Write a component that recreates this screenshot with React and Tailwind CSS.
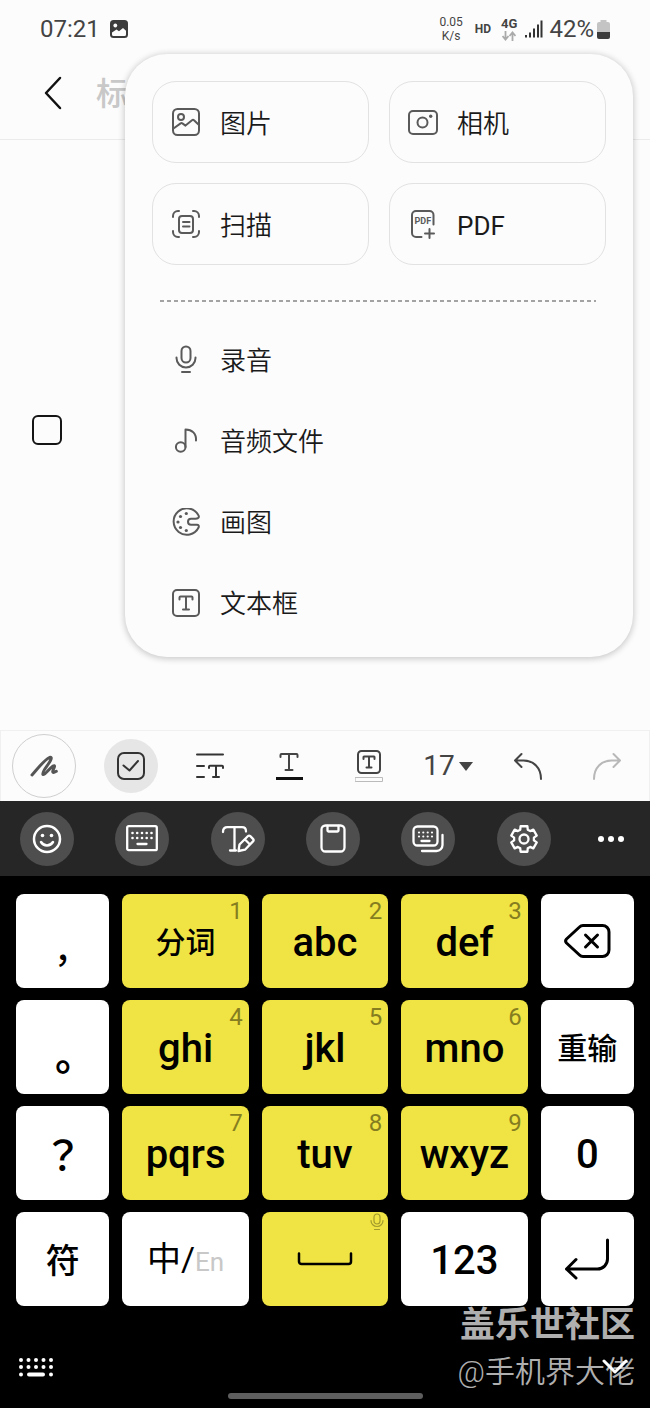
import React from 'react';
import clsx from 'clsx';

const Icon = ({ w, h, sw = 2, className, children }) => (
  <svg
    width={w}
    height={h}
    viewBox={`0 0 ${w} ${h}`}
    fill="none"
    stroke="currentColor"
    strokeWidth={sw}
    strokeLinecap="round"
    strokeLinejoin="round"
    className={clsx('shrink-0', className)}
    aria-hidden="true"
  >
    {children}
  </svg>
);

const Dots = ({ points, r }) =>
  points.map(([x, y]) => <circle key={`${x}-${y}`} cx={x} cy={y} r={r} fill="currentColor" stroke="none" />);

const grid = (xs, ys) => ys.flatMap((y) => xs.map((x) => [x, y]));

/* ---------- insert menu icons ---------- */

const ImageIcon = () => (
  <Icon w={28} h={28}>
    <rect x="1" y="1" width="26" height="26" rx="4.5" />
    <circle cx="9" cy="9" r="3" />
    <path d="M1.5 20.5L8.6 15.4a1.6 1.6 0 0 1 1.8 0L13.5 17.6 20 12.2a1.6 1.6 0 0 1 2 0L27 17" />
  </Icon>
);

const CameraIcon = () => (
  <Icon w={30} h={25}>
    <rect x="1" y="1" width="28" height="23" rx="4" />
    <circle cx="14.5" cy="12.5" r="5" />
    <circle cx="22.7" cy="6.3" r="1.7" fill="currentColor" stroke="none" />
  </Icon>
);

const ScanIcon = () => (
  <Icon w={28} h={28}>
    <path d="M1 7V6a5 5 0 0 1 5-5h1M21 1h1a5 5 0 0 1 5 5v1M27 21v1a5 5 0 0 1-5 5h-1M7 27H6a5 5 0 0 1-5-5v-1" />
    <rect x="7" y="6" width="14" height="17" rx="3" />
    <path d="M11 12h6.500M11 16.500h6.500" />
  </Icon>
);

const PdfIcon = () => (
  <Icon w={24} h={29}>
    <path d="M22.500 14.500V5a4 4 0 0 0-4-4H5a4 4 0 0 0-4 4V23a4 4 0 0 0 4 4h5.500M18.500 19v9M14 23.500h9" />
    <text x="11.800" y="13.500" fontSize="9" fontWeight="700" fontFamily="Roboto, sans-serif" textAnchor="middle" fill="currentColor" stroke="none">
      PDF
    </text>
  </Icon>
);

const MicIcon = () => (
  <Icon w={28} h={29}>
    <rect x="9.500" y="1.500" width="9" height="16" rx="4.500" />
    <path d="M4.500 12.500v.5a9.500 9.500 0 0 0 19 0v-.5M10 27h8" />
  </Icon>
);

const NoteIcon = () => (
  <Icon w={28} h={28}>
    <circle cx="8.700" cy="20" r="4.800" />
    <path d="M13.500 20V2.500c6.500 0 11 4 10.500 11" />
  </Icon>
);

const PaletteIcon = () => (
  <Icon w={28} h={28}>
    <path d="M26 10.200C27.200 9.500 27.100 8.300 26.300 7A13.200 13.200 0 1 0 26.600 19.500C27.200 18 26.500 16.800 25 16.800H19a3 3 0 0 1 0-6H23.500C24.600 10.800 25.400 10.600 26 10.200z" />
    <Dots r={1.6} points={[[14.300, 5.500], [8.500, 8.500], [6, 14], [8.500, 19.500], [14.300, 22.500]]} />
  </Icon>
);

const TextBoxIcon = () => (
  <Icon w={28} h={28}>
    <rect x="1" y="1" width="26" height="26" rx="4" />
    <path d="M7.500 10.500V8.500a1 1 0 0 1 1-1h11a1 1 0 0 1 1 1v2M14 7.500v13M11 20.500h6" />
  </Icon>
);

/* ---------- note toolbar icons ---------- */

const ScribbleIcon = () => (
  <Icon w={30} h={24} sw={3}>
    <path d="M3 21C8 15.500 15 6 20.500 3.500c3.500-1 1 3.500-1.500 7-2.500 3.500-6.500 8.500-5 10 2 1 6-6 10-8.500 2.500-1.200 1.500 1.200.3 3.500-1.200 2.700-.8 4 3 1.800" />
  </Icon>
);

const CheckIcon = () => (
  <Icon w={28} h={28} sw={2}>
    <rect x="1" y="1" width="26" height="26" rx="6" />
    <path d="M6.500 13.500l6 5L21 9" />
  </Icon>
);

const ParagraphIcon = () => (
  <Icon w={30} h={28} sw={2} className="text-[#333]">
    <path d="M2 2.500h26M2 14h7M2 25h7M14 16v-1.200a1 1 0 0 1 1-1h12a1 1 0 0 1 1 1V16M21 13.800V25M18 25h6" />
  </Icon>
);

const TextColorIcon = () => (
  <Icon w={28} h={30} sw={2} className="text-[#444]">
    <path d="M5.500 6V4a1 1 0 0 1 1-1h15a1 1 0 0 1 1 1v2M14 3v16M10.500 19h7" />
    <rect x="1" y="26" width="27" height="3" fill="#111" stroke="none" />
  </Icon>
);

const HighlightIcon = () => (
  <Icon w={28} h={32} sw={2}>
    <rect x="3" y="1" width="22" height="22" rx="3.500" />
    <path d="M8.500 9V7a.5.5 0 0 1 .5-.5h10a.5.5 0 0 1 .5.5v2M14 6.500v11M11.500 17.500h5" />
    <rect x=".5" y="27.500" width="27" height="4" stroke="#bbb" strokeWidth="1" />
  </Icon>
);

const UndoIcon = ({ className }) => (
  <Icon w={30} h={28} sw={2} className={className}>
    <path d="M8.500 2L2 8.500l6.500 6.500M2 8.500h8.500c10 0 17.500 7 17.500 18.500" />
  </Icon>
);

/* ---------- keyboard icons ---------- */

const SmileIcon = () => (
  <Icon w={30} h={30} sw={2.500}>
    <circle cx="15" cy="15" r="13" />
    <Dots r={1.8} points={[[10.500, 11.500], [19.500, 11.500]]} />
    <path d="M9 18c1.500 2.500 3.500 3.500 6 3.500s4.500-1 6-3.500" />
  </Icon>
);

const KeyboardIcon = () => (
  <Icon w={32} h={27} sw={2.300}>
    <rect x="1.200" y="1.200" width="29.600" height="24" rx="1.500" />
    <Dots r={1.3} points={grid([6.500, 11.200, 16, 20.700, 25.500], [8, 13])} />
    <path d="M11.500 19h9" />
  </Icon>
);

const TextEditIcon = () => (
  <Icon w={34} h={28} sw={2.300}>
    <path d="M2 7C2 4 3.500 2.200 6.500 2.200H21c3 0 4 1.800 4 4.300M13.500 2.500V25.500M9 25.500h6" />
    <path d="M17.500 26l1-6.500 8.300-8.300a1.800 1.800 0 0 1 2.500 0l2.700 2.700a1.800 1.800 0 0 1 0 2.500L24 24.700zM24 14.500l5 5" />
  </Icon>
);

const ClipboardIcon = () => (
  <Icon w={26} h={29} sw={2.300}>
    <rect x="1.500" y="1.500" width="23" height="26" rx="4" />
    <path d="M7.500 2v4.500a1 1 0 0 0 1 1h9a1 1 0 0 0 1-1V2" />
  </Icon>
);

const KeyboardStackIcon = () => (
  <Icon w={32} h={28} sw={2.300}>
    <rect x="1.500" y="1.500" width="24" height="19" rx="4" />
    <Dots r={1.1} points={grid([7, 11.300, 15.700, 20], [7.500, 11.500])} />
    <path d="M9.500 16h8M30.500 10v10a6 6 0 0 1-6 6H10" />
  </Icon>
);

// six wide teeth around the hub, the first one pointing up
const gearPath = () => {
  const pts = [];
  for (let i = 0; i < 6; i += 1) {
    const a = -90 + i * 60;
    [[-22, 10], [-15, 13.2], [15, 13.2], [22, 10]].forEach(([off, r]) => {
      const t = ((a + off) * Math.PI) / 180;
      pts.push(`${(15 + r * Math.cos(t)).toFixed(2)} ${(15 + r * Math.sin(t)).toFixed(2)}`);
    });
  }
  return `M${pts.join('L')}Z`;
};

const GearIcon = () => (
  <Icon w={30} h={30} sw={2.300}>
    <path d={gearPath()} />
    <circle cx="15" cy="15" r="4.500" />
  </Icon>
);

const MoreIcon = () => (
  <Icon w={26} h={6}>
    <Dots r={3} points={[[3, 3], [13, 3], [23, 3]]} />
  </Icon>
);

const BackspaceIcon = () => (
  <Icon w={48} h={36} sw={3}>
    <path d="M20 2.500H39.500a6.500 6.500 0 0 1 6.500 6.500V27a6.500 6.500 0 0 1-6.500 6.500H20a5 5 0 0 1-3.500-1.500L3.500 20a3 3 0 0 1 0-4L16.500 4a5 5 0 0 1 3.500-1.500z" />
    <path d="M22.500 12l12 12M34.500 12l-12 12" />
  </Icon>
);

const SpaceIcon = () => (
  <Icon w={56} h={14} sw={2.500}>
    <path d="M2 1.500v8a2.500 2.500 0 0 0 2.500 2.500h47a2.500 2.500 0 0 0 2.500-2.500v-8" />
  </Icon>
);

const EnterIcon = () => (
  <Icon w={46} h={42} sw={3}>
    <path d="M43.500 2v19a10 10 0 0 1-10 10H2.500M12 21.500L2.500 31l9.500 9" />
  </Icon>
);

const SmallMicIcon = () => (
  <svg width="14" height="18" viewBox="0 0 14 18" fill="none" stroke="currentColor" strokeWidth="1.200" strokeLinecap="round" aria-hidden="true">
    <rect x="4" y="1" width="6" height="10" rx="3" />
    <path d="M1 7.500a6 6 0 0 0 12 0M4.500 16.500h5" />
  </svg>
);

const HideKeyboardIcon = () => (
  <Icon w={36} h={20} sw={4}>
    <Dots r={2} points={[...grid([3, 10.500, 18, 25.500, 33], [3, 10]), [3, 17.500], [33, 17.500]]} />
    <path d="M11 17.500h14" />
  </Icon>
);

/* ---------- data ---------- */

const CARDS = [
  { label: '图片', icon: <ImageIcon /> },
  { label: '相机', icon: <CameraIcon /> },
  { label: '扫描', icon: <ScanIcon /> },
  { label: 'PDF', icon: <PdfIcon />, className: 'font-normal' },
];

const ROWS = [
  { label: '录音', icon: <MicIcon /> },
  { label: '音频文件', icon: <NoteIcon /> },
  { label: '画图', icon: <PaletteIcon /> },
  { label: '文本框', icon: <TextBoxIcon /> },
];

const KEYBOARD_TOOLS = [
  { label: '表情', icon: <SmileIcon /> },
  { label: '键盘', icon: <KeyboardIcon /> },
  { label: '文本编辑', icon: <TextEditIcon /> },
  { label: '剪贴板', icon: <ClipboardIcon /> },
  { label: '键盘模式', icon: <KeyboardStackIcon /> },
  { label: '设置', icon: <GearIcon /> },
];

const LATIN = 'pt-1 text-[40px] font-medium';
const HANZI = 'pt-1 text-3xl font-medium';

const KEYS = [
  { label: '，', className: "pt-9 font-['Noto_Sans_CJK_TC',sans-serif] text-[34px] font-medium" },
  { label: '分词', hint: '1', className: HANZI },
  { label: 'abc', hint: '2' },
  { label: 'def', hint: '3' },
  { name: '删除', icon: <BackspaceIcon />, className: 'p-0' },
  { label: '。', className: "pt-9 font-['Noto_Sans_CJK_TC',sans-serif] text-[40px] font-bold" },
  { label: 'ghi', hint: '4' },
  { label: 'jkl', hint: '5' },
  { label: 'mno', hint: '6' },
  { label: '重输', className: HANZI },
  { label: '？', className: "font-['Noto_Sans_CJK_TC',sans-serif] text-[40px] font-medium" },
  { label: 'pqrs', hint: '7' },
  { label: 'tuv', hint: '8' },
  { label: 'wxyz', hint: '9' },
  { label: '0' },
  { label: '符', className: 'pt-1 text-[34px] font-medium' },
  { label: '中/', sub: 'En', className: 'text-[34px]' },
  { name: '空格', icon: <SpaceIcon />, yellow: true, corner: <SmallMicIcon />, className: 'p-0' },
  { label: '123' },
  { name: '换行', icon: <EnterIcon />, className: 'p-0' },
];

/* ---------- sections ---------- */

const StatusBar = () => (
  <div className="flex h-[46px] items-center pt-3 pr-10 pl-10 text-2xl text-[#444]">
    <span>07:21</span>
    <svg width="18" height="18" viewBox="0 0 18 18" className="ml-2.5" aria-hidden="true">
      <rect width="18" height="18" rx="3.500" fill="#3c3c3c" />
      <circle cx="5.300" cy="5.500" r="1.900" fill="#fcfcfc" />
      <path d="M2 14.500V12.500L6.500 9.500 9 11.200 13 8 16 10.800V14.500a1.500 1.500 0 0 1-1.500 1.500H3.500A1.500 1.500 0 0 1 2 14.500z" fill="#fcfcfc" />
    </svg>
    <div className="ml-auto flex items-center">
      <span className="flex flex-col items-center text-xs leading-[14px]">
        <span>0.05</span>
        <span>K/s</span>
      </span>
      <span className="ml-3 text-xs font-bold">HD</span>
      <span className="ml-[10px] flex flex-col items-center text-[13px] leading-3 font-bold">
        4G
        <svg width="14" height="10" viewBox="0 0 14 10" fill="none" stroke="#aaa" strokeWidth="1.800" className="mt-px" aria-hidden="true">
          <path d="M3.500 0v8M.5 5l3 3.500 3-3.500M10.500 10V2M7.500 5l3-3.500 3 3.500" />
        </svg>
      </span>
      <svg width="18" height="18" viewBox="0 0 18 18" className="ml-2" fill="#333" aria-hidden="true">
        <rect x="0" y="15" width="2" height="2.500" />
        <rect x="4" y="12.500" width="2" height="5" />
        <rect x="8" y="8.500" width="2" height="9" />
        <rect x="12" y="4.500" width="2" height="13" />
        <rect x="15.500" y="0.500" width="2" height="17" />
      </svg>
      <span className="ml-1.5">42%</span>
      <svg width="13" height="19" viewBox="0 0 13 19" className="ml-[3px]" aria-hidden="true">
        <path d="M3.500 0h6v2H11a2 2 0 0 1 2 2v8.500H0V4a2 2 0 0 1 2-2h1.500z" fill="#c4c4c4" />
        <path d="M0 12h13v5a2 2 0 0 1-2 2H2a2 2 0 0 1-2-2z" fill="#3c3c3c" />
      </svg>
    </div>
  </div>
);

const Header = () => (
  <header className="flex h-[94px] items-center border-b border-[#ebebeb] pl-10">
    <button type="button" aria-label="返回" className="text-[#111]">
      <Icon w={26} h={34} sw={2.500}>
        <path d="M20 2L6 17l14 15" />
      </Icon>
    </button>
    <input
      aria-label="标题"
      placeholder="标题"
      className="ml-[30px] w-24 min-w-0 bg-transparent pt-0.5 text-[32px] font-medium outline-none placeholder:text-[#c8c8c8]"
    />
  </header>
);

const InsertMenu = () => (
  <div className="absolute top-[54px] right-[17px] left-[125px] rounded-[42px] bg-[#fcfcfc] px-[27px] pt-[27px] pb-[14px] text-[26px] font-[350] text-[#1a1a1a] shadow-[0_1px_6px_1px_rgba(0,0,0,0.2)]">
    <div className="grid grid-cols-2 gap-5">
      {CARDS.map(({ label, icon, className }) => (
        <button key={label} type="button" className="flex h-[82px] items-center rounded-3xl border border-[#e2e2e2] pl-[18px]">
          <span className="flex w-[30px] justify-center text-[#5a5a5a]">{icon}</span>
          <span className={clsx('ml-[19px] pt-1', className)}>{label}</span>
        </button>
      ))}
    </div>
    <div className="mt-[35px] mr-2.5 mb-[17px] ml-2 h-[2px] bg-[repeating-linear-gradient(90deg,#a3a3a3_0_4px,transparent_4px_7px)]" />
    {ROWS.map(({ label, icon }) => (
      <button key={label} type="button" className="flex h-[81px] w-full items-center pl-[19px]">
        <span className="flex w-[30px] justify-center text-[#5a5a5a]">{icon}</span>
        <span className="ml-[19px] pt-1">{label}</span>
      </button>
    ))}
  </div>
);

const TOOL = 'flex items-center justify-center';

const NoteToolbar = () => (
  <div className="flex h-[71px] items-center border border-b-0 border-[#f0f0f0] pr-0.5 pl-[11px] text-[#444]">
    <button type="button" aria-label="手写" className={`${TOOL} size-16 shrink-0 rounded-full border border-[#cfcfcf] text-[#555]`}>
      <ScribbleIcon />
    </button>
    <button type="button" aria-label="待办" className={`${TOOL} ml-7 size-[54px] shrink-0 rounded-full bg-[#e6e6e6] text-[#333]`}>
      <CheckIcon />
    </button>
    <div className="ml-3 grid flex-1 grid-cols-6">
      <button type="button" aria-label="段落" className={TOOL}><ParagraphIcon /></button>
      <button type="button" aria-label="文字颜色" className={TOOL}><TextColorIcon /></button>
      <button type="button" aria-label="文字背景" className={TOOL}><HighlightIcon /></button>
      <div className={TOOL}>
        <select aria-label="字号" defaultValue="17" className="w-9 appearance-none bg-transparent text-[28px]">
          <option>17</option>
          <option>18</option>
          <option>20</option>
        </select>
        <svg width="14" height="9" viewBox="0 0 14 9" fill="#444" aria-hidden="true">
          <path d="M0 0h14L7 9z" />
        </svg>
      </div>
      <button type="button" aria-label="撤销" className={TOOL}><UndoIcon /></button>
      <button type="button" aria-label="重做" className={TOOL}><UndoIcon className="-scale-x-100 text-[#b8b8b8]" /></button>
    </div>
  </div>
);

const Key = ({ label, name, icon, hint, sub, corner, yellow, className = LATIN }) => (
  <button
    type="button"
    aria-label={name}
    className={clsx(
      'relative flex h-[94px] items-center justify-center rounded-lg leading-none text-black',
      hint || yellow ? 'bg-[#efe443]' : 'bg-white',
      className,
    )}
  >
    {icon || label}
    {sub && <span className="pt-1.5 text-[26px] text-[#c8c8c8]">{sub}</span>}
    {hint && <span className="absolute top-[5px] right-1.5 text-2xl leading-6 font-normal text-[#857d20]">{hint}</span>}
    {corner && <span className="absolute top-px right-1 text-[#a39b2c]">{corner}</span>}
  </button>
);

const Keyboard = () => (
  <div className="bg-black">
    <div className="flex h-[75px] items-center justify-between bg-[#262626] px-5 text-white">
      {KEYBOARD_TOOLS.map(({ label, icon }) => (
        <button key={label} type="button" aria-label={label} className={`${TOOL} size-[54px] rounded-full bg-[#4e4e4e]`}>
          {icon}
        </button>
      ))}
      <button type="button" aria-label="更多" className={`${TOOL} h-[54px] w-[38px]`}>
        <MoreIcon />
      </button>
    </div>
    <div className="grid grid-cols-[93fr_126fr_126fr_126fr_93fr] gap-x-[13px] gap-y-3 px-4 pt-[18px]">
      {KEYS.map((key) => (
        <Key key={key.label || key.name} {...key} />
      ))}
    </div>
    <div className="flex items-center justify-between pt-[51px] pr-[22px] pl-[18px] text-white">
      <button type="button" aria-label="切换键盘"><HideKeyboardIcon /></button>
      <button type="button" aria-label="收起键盘">
        <Icon w={26} h={16} sw={3}>
          <path d="M2 2l11 11L24 2" />
        </Icon>
      </button>
    </div>
    <div className="mx-auto mt-4 h-1.5 w-[195px] rounded-full bg-[#5e5e5e]" />
    <div className="h-[9px]" />
  </div>
);

export default function App() {
  return (
    <div className="relative flex min-h-screen flex-col bg-[#fcfcfc] font-[Roboto,'Noto_Sans_CJK_SC',sans-serif]">
      <StatusBar />
      <Header />
      <main className="min-h-[580px] flex-1 pt-[275px] pl-8">
        <input
          type="checkbox"
          aria-label="待办事项"
          className="block size-[30px] appearance-none rounded-md border-2 border-[#151515]"
        />
      </main>
      <InsertMenu />
      <NoteToolbar />
      <Keyboard />
      <div className="pointer-events-none absolute right-[15px] bottom-[13px] text-right text-white/70">
        <p className="text-[35px] leading-[46px] font-bold">盖乐世社区</p>
        <p className="text-[30px] leading-[46px] font-[350]">@手机界大佬</p>
      </div>
    </div>
  );
}
